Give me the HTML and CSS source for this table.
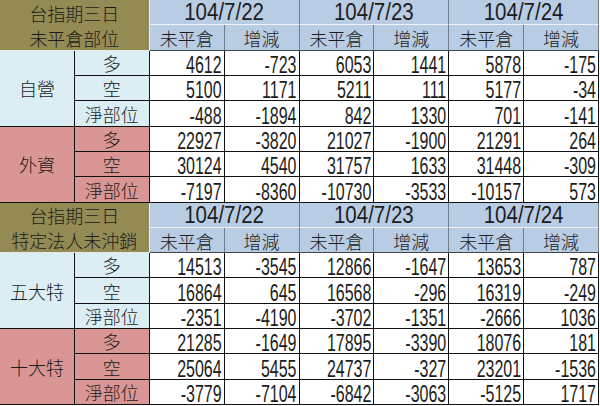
FILE: index.html
```html
<!DOCTYPE html>
<html lang="zh-Hant">
<head>
<meta charset="utf-8">
<link rel="stylesheet" href="styles.css">
</head>
<body>
<div class="sheet">
  <div class="gold"><div>台指期三日</div><div>未平倉部位</div></div>
  <div class="date"><span class="d">104/7/22</span></div>
  <div class="date"><span class="d">104/7/23</span></div>
  <div class="date"><span class="d">104/7/24</span></div>
  <div class="sub">未平倉</div><div class="sub">增減</div>
  <div class="sub">未平倉</div><div class="sub">增減</div>
  <div class="sub">未平倉</div><div class="sub">增減</div>

  <div class="cat blue">自營</div>
  <div class="lbl blue">多</div>
  <div class="num"><span class="n">4612</span></div><div class="num"><span class="n">-723</span></div>
  <div class="num"><span class="n">6053</span></div><div class="num"><span class="n">1441</span></div>
  <div class="num"><span class="n">5878</span></div><div class="num"><span class="n">-175</span></div>
  <div class="lbl blue">空</div>
  <div class="num"><span class="n">5100</span></div><div class="num"><span class="n">1171</span></div>
  <div class="num"><span class="n">5211</span></div><div class="num"><span class="n">111</span></div>
  <div class="num"><span class="n">5177</span></div><div class="num"><span class="n">-34</span></div>
  <div class="lbl blue">淨部位</div>
  <div class="num"><span class="n">-488</span></div><div class="num"><span class="n">-1894</span></div>
  <div class="num"><span class="n">842</span></div><div class="num"><span class="n">1330</span></div>
  <div class="num"><span class="n">701</span></div><div class="num"><span class="n">-141</span></div>

  <div class="cat pink">外資</div>
  <div class="lbl pink">多</div>
  <div class="num"><span class="n">22927</span></div><div class="num"><span class="n">-3820</span></div>
  <div class="num"><span class="n">21027</span></div><div class="num"><span class="n">-1900</span></div>
  <div class="num"><span class="n">21291</span></div><div class="num"><span class="n">264</span></div>
  <div class="lbl pink">空</div>
  <div class="num"><span class="n">30124</span></div><div class="num"><span class="n">4540</span></div>
  <div class="num"><span class="n">31757</span></div><div class="num"><span class="n">1633</span></div>
  <div class="num"><span class="n">31448</span></div><div class="num"><span class="n">-309</span></div>
  <div class="lbl pink">淨部位</div>
  <div class="num"><span class="n">-7197</span></div><div class="num"><span class="n">-8360</span></div>
  <div class="num"><span class="n">-10730</span></div><div class="num"><span class="n">-3533</span></div>
  <div class="num"><span class="n">-10157</span></div><div class="num"><span class="n">573</span></div>

  <div class="gold"><div>台指期三日</div><div>特定法人未沖銷</div></div>
  <div class="date"><span class="d">104/7/22</span></div>
  <div class="date"><span class="d">104/7/23</span></div>
  <div class="date"><span class="d">104/7/24</span></div>
  <div class="sub">未平倉</div><div class="sub">增減</div>
  <div class="sub">未平倉</div><div class="sub">增減</div>
  <div class="sub">未平倉</div><div class="sub">增減</div>

  <div class="cat blue">五大特</div>
  <div class="lbl blue">多</div>
  <div class="num"><span class="n">14513</span></div><div class="num"><span class="n">-3545</span></div>
  <div class="num"><span class="n">12866</span></div><div class="num"><span class="n">-1647</span></div>
  <div class="num"><span class="n">13653</span></div><div class="num"><span class="n">787</span></div>
  <div class="lbl blue">空</div>
  <div class="num"><span class="n">16864</span></div><div class="num"><span class="n">645</span></div>
  <div class="num"><span class="n">16568</span></div><div class="num"><span class="n">-296</span></div>
  <div class="num"><span class="n">16319</span></div><div class="num"><span class="n">-249</span></div>
  <div class="lbl blue">淨部位</div>
  <div class="num"><span class="n">-2351</span></div><div class="num"><span class="n">-4190</span></div>
  <div class="num"><span class="n">-3702</span></div><div class="num"><span class="n">-1351</span></div>
  <div class="num"><span class="n">-2666</span></div><div class="num"><span class="n">1036</span></div>

  <div class="cat pink">十大特</div>
  <div class="lbl pink">多</div>
  <div class="num"><span class="n">21285</span></div><div class="num"><span class="n">-1649</span></div>
  <div class="num"><span class="n">17895</span></div><div class="num"><span class="n">-3390</span></div>
  <div class="num"><span class="n">18076</span></div><div class="num"><span class="n">181</span></div>
  <div class="lbl pink">空</div>
  <div class="num"><span class="n">25064</span></div><div class="num"><span class="n">5455</span></div>
  <div class="num"><span class="n">24737</span></div><div class="num"><span class="n">-327</span></div>
  <div class="num"><span class="n">23201</span></div><div class="num"><span class="n">-1536</span></div>
  <div class="lbl pink">淨部位</div>
  <div class="num"><span class="n">-3779</span></div><div class="num"><span class="n">-7104</span></div>
  <div class="num"><span class="n">-6842</span></div><div class="num"><span class="n">-3063</span></div>
  <div class="num"><span class="n">-5125</span></div><div class="num"><span class="n">1717</span></div>
</div>
</body>
</html>
```
FILE: styles.css
```css
html, body {
  margin: 0;
  padding: 0;
  background: #ffffff;
}
.sheet {
  display: grid;
  grid-template-columns: repeat(8, 1fr);
  grid-template-rows: repeat(16, 1fr);
  width: 599px;
  height: 405px;
  color: #1c1c1c;
  font-family: "Noto Sans CJK TC", "Noto Sans CJK SC", sans-serif;
  font-size: 18px;
  font-weight: 300;
}
.sheet > div {
  box-sizing: border-box;
  border-right: 1px solid #111;
  border-bottom: 1px solid #111;
  display: flex;
  align-items: center;
  justify-content: center;
  line-height: 1;
  min-width: 0;
}
.sheet > .gold {
  grid-column: span 2;
  grid-row: span 2;
  background: #948a54;
  flex-direction: column;
  align-items: stretch;
  border-right: 1px solid #eeeeee;
  border-bottom: 1px solid #e8e8e8;
}
.gold > div {
  flex: 1;
  display: flex;
  align-items: center;
  justify-content: center;
  padding-top: 1px;
}
.sheet > .date {
  grid-column: span 2;
  background: #b8cce4;
  border-right: 1px solid #6f7b88;
  border-bottom: 1px solid #eef2f8;
}
.d {
  display: inline-block;
  font-family: "Liberation Sans", sans-serif;
  font-weight: 400;
  font-size: 20.5px;
  line-height: 20px;
  transform: scaleY(1.13);
}
.sheet > .sub {
  background: #b8cce4;
  border-right: 1px solid #6f7b88;
  border-bottom: 1px solid #444;
  padding-top: 2px;
}
.sheet > .cat {
  grid-row: span 3;
}
.sheet > .lbl {
  align-items: flex-end;
  padding-bottom: 3px;
}
.blue {
  background: #daeef3;
}
.pink {
  background: #da9694;
}
.sheet > .num {
  background: #ffffff;
  justify-content: flex-end;
  align-items: flex-end;
  padding-right: 2px;
  padding-bottom: 1px;
}
.n {
  display: inline-block;
  font-family: "Liberation Sans", sans-serif;
  font-weight: 400;
  font-size: 16px;
  line-height: 13px;
  transform: scaleY(1.46);
  transform-origin: right bottom;
  white-space: nowrap;
}
```
